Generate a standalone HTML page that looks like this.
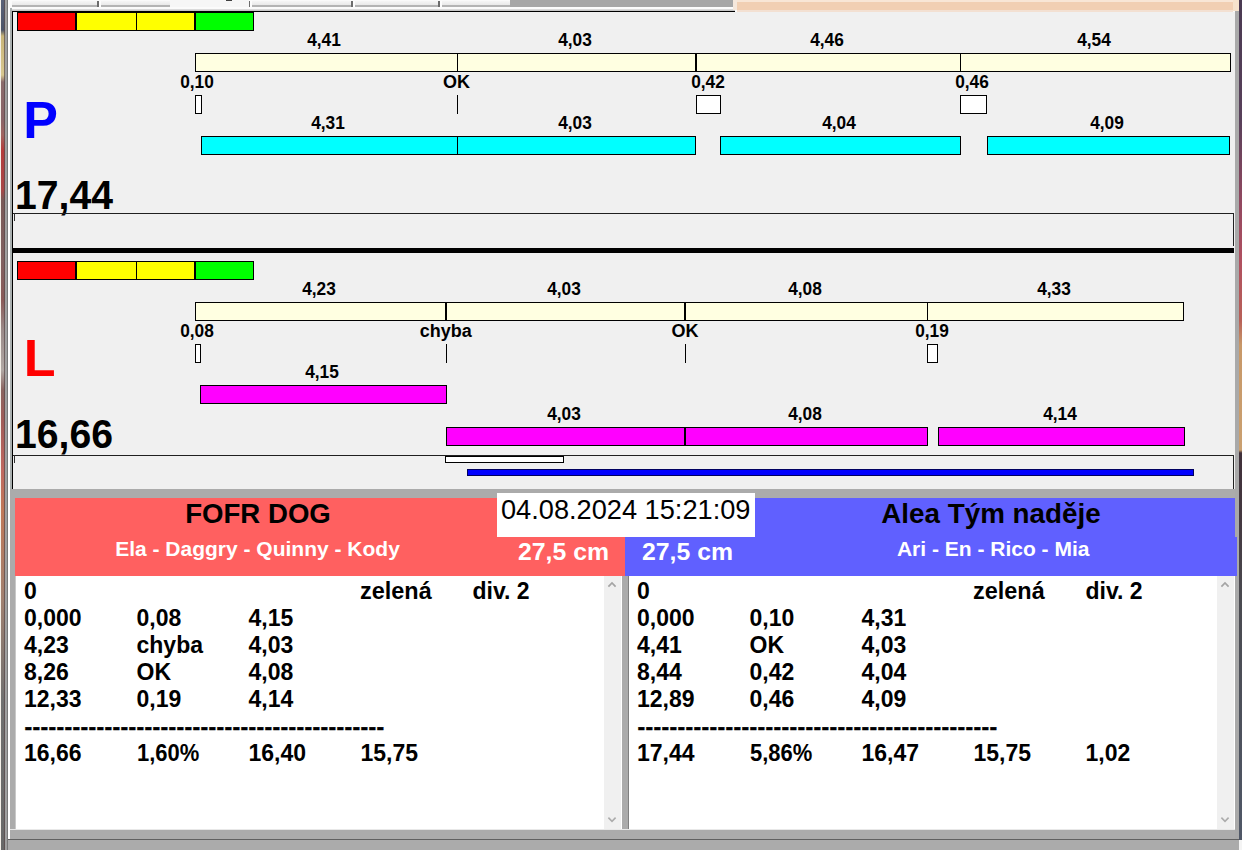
<!DOCTYPE html>
<html lang="cs"><head><meta charset="utf-8"><title>Flyball</title>
<style>
html,body{margin:0;padding:0;}
body{width:1242px;height:850px;overflow:hidden;position:relative;background:#f0f0f0;font-family:"Liberation Sans",sans-serif;}
.r{position:absolute;box-sizing:border-box;}
.t{position:absolute;white-space:pre;font-weight:700;}
.dash{-webkit-text-stroke:0.45px #000;}
</style></head><body>
<div class="r" style="left:0px;top:0px;width:1242px;height:12px;background:#fafafa;"></div>
<div class="r" style="left:12px;top:1px;width:498px;height:4px;background:#f0f0f0;background:linear-gradient(#f6f6f6,#e9e9e9);"></div>
<div class="r" style="left:12px;top:5px;width:498px;height:2px;background:#b4b4b4;"></div>
<div class="r" style="left:12px;top:7px;width:723px;height:2px;background:#fbfbfb;"></div>
<div class="r" style="left:12px;top:9px;width:723px;height:2px;background:#d0d0d0;background:linear-gradient(#e4e4e4,#bcbcbc);"></div>
<div class="r" style="left:97px;top:1px;width:2px;height:6px;background:#6c6c6c;"></div>
<div class="r" style="left:99px;top:1px;width:2px;height:6px;background:#fcfcfc;"></div>
<div class="r" style="left:248px;top:1px;width:2px;height:6px;background:#6c6c6c;"></div>
<div class="r" style="left:250px;top:1px;width:2px;height:6px;background:#fcfcfc;"></div>
<div class="r" style="left:351px;top:1px;width:2px;height:6px;background:#6c6c6c;"></div>
<div class="r" style="left:353px;top:1px;width:2px;height:6px;background:#fcfcfc;"></div>
<div class="r" style="left:438px;top:1px;width:2px;height:6px;background:#6c6c6c;"></div>
<div class="r" style="left:440px;top:1px;width:2px;height:6px;background:#fcfcfc;"></div>
<div class="r" style="left:170px;top:0px;width:79px;height:7px;background:#f6f6f6;"></div>
<div class="r" style="left:226px;top:0px;width:6px;height:1px;background:#404040;"></div>
<div class="r" style="left:510px;top:0px;width:223px;height:7px;background:#a6a6a6;"></div>
<div class="r" style="left:733px;top:0px;width:4px;height:10px;background:#f6e8dc;"></div>
<div class="r" style="left:737px;top:0px;width:496px;height:11px;background:#f1cfb3;"></div>
<div class="r" style="left:737px;top:0px;width:496px;height:2px;background:#f8e6d6;"></div>
<div class="r" style="left:737px;top:10px;width:496px;height:2px;background:#f3e0d2;"></div>
<div class="r" style="left:13px;top:12px;width:1222px;height:477px;background:#f0f0f0;"></div>
<div class="r" style="left:0px;top:0px;width:1px;height:850px;background:#f4f0e8;"></div>
<div class="r" style="left:1px;top:0px;width:4px;height:850px;background:#806060;background:linear-gradient(#5a6278 0,#4c5468 30px,#c8b478 36px,#d8c890 75px,#8a6a6a 82px,#8a6468 120px,#a06460 135px,#b43c3c 150px,#a84848 190px,#7a5a58 200px,#806060 260px,#8a5a58 300px,#9a8a88 330px,#b0a8a4 370px,#8a6460 390px,#a05c58 420px,#c06860 470px,#c07858 510px,#a08070 600px,#707070 700px,#686868 850px);"></div>
<div class="r" style="left:4px;top:0px;width:1px;height:850px;background:#5a4a4a;opacity:.7;"></div>
<div class="r" style="left:5px;top:0px;width:2px;height:850px;background:#a0a0a0;"></div>
<div class="r" style="left:7px;top:0px;width:1px;height:850px;background:#787878;"></div>
<div class="r" style="left:8px;top:8px;width:2px;height:832px;background:#ffffff;"></div>
<div class="r" style="left:10px;top:8px;width:2px;height:481px;background:#aab0b0;"></div>
<div class="r" style="left:12px;top:11px;width:1px;height:478px;background:#000;"></div>
<div class="r" style="left:1235px;top:11px;width:4px;height:839px;background:#a9a9a9;"></div>
<div class="r" style="left:1239px;top:0px;width:3px;height:850px;background:#504050;background:linear-gradient(#4a3a52 0,#58405a 120px,#904860 200px,#b05060 260px,#b86058 320px,#c89868 345px,#caa070 450px,#40303a 453px,#443840 520px,#4a4a50 600px,#505868 850px);"></div>
<div class="r" style="left:1233px;top:0px;width:6px;height:11px;background:#f6e2cc;"></div>
<div class="r" style="left:12px;top:11px;width:723px;height:1px;background:#000;"></div>
<div class="r" style="left:17px;top:12px;width:59px;height:19px;background:#ff0000;border:1px solid #000;"></div>
<div class="r" style="left:76px;top:12px;width:61px;height:19px;background:#ffff00;border:1px solid #000;"></div>
<div class="r" style="left:136px;top:12px;width:59px;height:19px;background:#ffff00;border:1px solid #000;"></div>
<div class="r" style="left:195px;top:12px;width:59px;height:19px;background:#00ff00;border:1px solid #000;"></div>
<div class="r" style="left:195px;top:53px;width:1036px;height:19px;background:#ffffe1;border:1px solid #000;"></div>
<div class="r" style="left:457px;top:53px;width:1px;height:19px;background:#000;"></div>
<div class="r" style="left:695px;top:53px;width:2px;height:19px;background:#000;"></div>
<div class="r" style="left:960px;top:53px;width:1px;height:19px;background:#000;"></div>
<div class="r" style="left:195px;top:95px;width:7px;height:19px;background:#fff;border:1px solid #000;"></div>
<div class="r" style="left:457px;top:95px;width:1px;height:19px;background:#000;"></div>
<div class="r" style="left:696px;top:95px;width:25px;height:19px;background:#fff;border:1px solid #000;"></div>
<div class="r" style="left:960px;top:95px;width:27px;height:19px;background:#fff;border:1px solid #000;"></div>
<div class="r" style="left:201px;top:136px;width:257px;height:19px;background:#00ffff;border:1px solid #000;"></div>
<div class="r" style="left:457px;top:136px;width:239px;height:19px;background:#00ffff;border:1px solid #000;"></div>
<div class="r" style="left:720px;top:136px;width:241px;height:19px;background:#00ffff;border:1px solid #000;"></div>
<div class="r" style="left:987px;top:136px;width:243px;height:19px;background:#00ffff;border:1px solid #000;"></div>
<div class="t " style="top:30.76px;font-size:18px;line-height:18px;color:#000;transform:scaleX(0.96);transform-origin:center center;left:174.10px;width:300px;text-align:center;">4,41</div>
<div class="t " style="top:30.76px;font-size:18px;line-height:18px;color:#000;transform:scaleX(0.96);transform-origin:center center;left:424.90px;width:300px;text-align:center;">4,03</div>
<div class="t " style="top:30.76px;font-size:18px;line-height:18px;color:#000;transform:scaleX(0.96);transform-origin:center center;left:676.60px;width:300px;text-align:center;">4,46</div>
<div class="t " style="top:30.76px;font-size:18px;line-height:18px;color:#000;transform:scaleX(0.96);transform-origin:center center;left:944.10px;width:300px;text-align:center;">4,54</div>
<div class="t " style="top:73.36px;font-size:18px;line-height:18px;color:#000;transform:scaleX(0.96);transform-origin:center center;left:47.10px;width:300px;text-align:center;">0,10</div>
<div class="t " style="top:73.36px;font-size:18px;line-height:18px;color:#000;transform:scaleX(1.0);transform-origin:center center;left:306.60px;width:300px;text-align:center;">OK</div>
<div class="t " style="top:73.36px;font-size:18px;line-height:18px;color:#000;transform:scaleX(0.96);transform-origin:center center;left:557.60px;width:300px;text-align:center;">0,42</div>
<div class="t " style="top:73.36px;font-size:18px;line-height:18px;color:#000;transform:scaleX(0.96);transform-origin:center center;left:822.20px;width:300px;text-align:center;">0,46</div>
<div class="t " style="top:113.76px;font-size:18px;line-height:18px;color:#000;transform:scaleX(0.96);transform-origin:center center;left:177.90px;width:300px;text-align:center;">4,31</div>
<div class="t " style="top:113.76px;font-size:18px;line-height:18px;color:#000;transform:scaleX(0.96);transform-origin:center center;left:424.90px;width:300px;text-align:center;">4,03</div>
<div class="t " style="top:113.76px;font-size:18px;line-height:18px;color:#000;transform:scaleX(0.96);transform-origin:center center;left:688.60px;width:300px;text-align:center;">4,04</div>
<div class="t " style="top:113.76px;font-size:18px;line-height:18px;color:#000;transform:scaleX(0.96);transform-origin:center center;left:957.10px;width:300px;text-align:center;">4,09</div>
<div class="t " style="top:93.98px;font-size:52px;line-height:52px;color:#0000ff;left:23.30px;">P</div>
<div class="t " style="top:175.29px;font-size:41px;line-height:41px;color:#000;transform:scaleX(0.955);transform-origin:left center;left:15.00px;">17,44</div>
<div class="r" style="left:13px;top:213px;width:1221px;height:1px;background:#202020;"></div>
<div class="r" style="left:1233px;top:213px;width:1px;height:33px;background:#202020;"></div>
<div class="r" style="left:14px;top:213px;width:1px;height:8px;background:#303030;"></div>
<div class="r" style="left:12px;top:248px;width:1222px;height:5px;background:#000;"></div>
<div class="r" style="left:17px;top:261px;width:59px;height:19px;background:#ff0000;border:1px solid #000;"></div>
<div class="r" style="left:76px;top:261px;width:61px;height:19px;background:#ffff00;border:1px solid #000;"></div>
<div class="r" style="left:136px;top:261px;width:59px;height:19px;background:#ffff00;border:1px solid #000;"></div>
<div class="r" style="left:195px;top:261px;width:59px;height:19px;background:#00ff00;border:1px solid #000;"></div>
<div class="r" style="left:195px;top:302px;width:989px;height:19px;background:#ffffe1;border:1px solid #000;"></div>
<div class="r" style="left:445px;top:302px;width:2px;height:19px;background:#000;"></div>
<div class="r" style="left:684px;top:302px;width:2px;height:19px;background:#000;"></div>
<div class="r" style="left:927px;top:302px;width:1px;height:19px;background:#000;"></div>
<div class="r" style="left:195px;top:344px;width:6px;height:19px;background:#fff;border:1px solid #000;"></div>
<div class="r" style="left:446px;top:344px;width:1px;height:19px;background:#000;"></div>
<div class="r" style="left:685px;top:344px;width:1px;height:19px;background:#000;"></div>
<div class="r" style="left:927px;top:344px;width:11px;height:19px;background:#fff;border:1px solid #000;"></div>
<div class="r" style="left:200px;top:385px;width:247px;height:19px;background:#ff00ff;border:1px solid #000;"></div>
<div class="r" style="left:446px;top:427px;width:239px;height:19px;background:#ff00ff;border:1px solid #000;"></div>
<div class="r" style="left:685px;top:427px;width:243px;height:19px;background:#ff00ff;border:1px solid #000;"></div>
<div class="r" style="left:938px;top:427px;width:247px;height:19px;background:#ff00ff;border:1px solid #000;"></div>
<div class="t " style="top:279.76px;font-size:18px;line-height:18px;color:#000;transform:scaleX(0.96);transform-origin:center center;left:169.10px;width:300px;text-align:center;">4,23</div>
<div class="t " style="top:279.76px;font-size:18px;line-height:18px;color:#000;transform:scaleX(0.96);transform-origin:center center;left:414.20px;width:300px;text-align:center;">4,03</div>
<div class="t " style="top:279.76px;font-size:18px;line-height:18px;color:#000;transform:scaleX(0.96);transform-origin:center center;left:655.10px;width:300px;text-align:center;">4,08</div>
<div class="t " style="top:279.76px;font-size:18px;line-height:18px;color:#000;transform:scaleX(0.96);transform-origin:center center;left:904.10px;width:300px;text-align:center;">4,33</div>
<div class="t " style="top:322.36px;font-size:18px;line-height:18px;color:#000;transform:scaleX(0.96);transform-origin:center center;left:46.60px;width:300px;text-align:center;">0,08</div>
<div class="t " style="top:322.36px;font-size:18px;line-height:18px;color:#000;transform:scaleX(1.0);transform-origin:center center;left:295.70px;width:300px;text-align:center;">chyba</div>
<div class="t " style="top:322.36px;font-size:18px;line-height:18px;color:#000;transform:scaleX(1.0);transform-origin:center center;left:535.00px;width:300px;text-align:center;">OK</div>
<div class="t " style="top:322.36px;font-size:18px;line-height:18px;color:#000;transform:scaleX(0.96);transform-origin:center center;left:781.60px;width:300px;text-align:center;">0,19</div>
<div class="t " style="top:362.76px;font-size:18px;line-height:18px;color:#000;transform:scaleX(0.96);transform-origin:center center;left:172.30px;width:300px;text-align:center;">4,15</div>
<div class="t " style="top:404.76px;font-size:18px;line-height:18px;color:#000;transform:scaleX(0.96);transform-origin:center center;left:414.20px;width:300px;text-align:center;">4,03</div>
<div class="t " style="top:404.76px;font-size:18px;line-height:18px;color:#000;transform:scaleX(0.96);transform-origin:center center;left:655.10px;width:300px;text-align:center;">4,08</div>
<div class="t " style="top:404.76px;font-size:18px;line-height:18px;color:#000;transform:scaleX(0.96);transform-origin:center center;left:910.10px;width:300px;text-align:center;">4,14</div>
<div class="t " style="top:331.98px;font-size:52px;line-height:52px;color:#ff0000;left:23.70px;">L</div>
<div class="t " style="top:414.29px;font-size:41px;line-height:41px;color:#000;transform:scaleX(0.955);transform-origin:left center;left:15.00px;">16,66</div>
<div class="r" style="left:13px;top:455px;width:1221px;height:1px;background:#202020;"></div>
<div class="r" style="left:1233px;top:455px;width:1px;height:34px;background:#202020;"></div>
<div class="r" style="left:14px;top:455px;width:1px;height:8px;background:#303030;"></div>
<div class="r" style="left:445px;top:456px;width:119px;height:7px;background:#fff;border:1px solid #000;"></div>
<div class="r" style="left:467px;top:469px;width:727px;height:7px;background:#0000ff;border:1px solid #000060;"></div>
<div class="r" style="left:10px;top:489px;width:1225px;height:361px;background:#ababab;"></div>
<div class="r" style="left:8px;top:839px;width:1231px;height:1px;background:#606060;"></div>
<div class="r" style="left:8px;top:840px;width:1231px;height:10px;background:#ababab;"></div>
<div class="r" style="left:1239px;top:840px;width:3px;height:10px;background:#f4f4f4;"></div>
<div class="r" style="left:15px;top:498px;width:610px;height:78px;background:#ff6060;"></div>
<div class="r" style="left:625px;top:498px;width:610px;height:78px;background:#6060ff;"></div>
<div class="r" style="left:1235px;top:537px;width:2px;height:39px;background:#6060ff;"></div>
<div class="r" style="left:497px;top:493px;width:258px;height:44px;background:#fff;"></div>
<div class="t " style="top:495.88px;font-size:27.2px;line-height:27.2px;color:#000;font-weight:400;left:501.00px;">04.08.2024 15:21:09</div>
<div class="t " style="top:499.64px;font-size:27.6px;line-height:27.6px;color:#000;left:108.00px;width:300px;text-align:center;">FOFR DOG</div>
<div class="t " style="top:538.22px;font-size:21px;line-height:21px;color:#fff;left:107.50px;width:300px;text-align:center;">Ela - Daggry - Quinny - Kody</div>
<div class="t " style="top:540.21px;font-size:24.8px;line-height:24.8px;color:#fff;left:518.00px;">27,5 cm</div>
<div class="t " style="top:540.21px;font-size:24.8px;line-height:24.8px;color:#fff;left:642.00px;">27,5 cm</div>
<div class="t " style="top:500.17px;font-size:27.8px;line-height:27.8px;color:#000;left:841.00px;width:300px;text-align:center;">Alea Tým naděje</div>
<div class="t " style="top:538.22px;font-size:21px;line-height:21px;color:#fff;left:843.20px;width:300px;text-align:center;">Ari - En - Rico - Mia</div>
<div class="r" style="left:15px;top:576px;width:607px;height:253px;background:#fff;"></div>
<div class="r" style="left:604px;top:576px;width:17px;height:253px;background:#f0f0f0;"></div>
<svg class="r" style="left:605.5px;top:579px" width="12" height="12" viewBox="0 0 12 12"><path d="M2.4 7.6 L6 3.9 L9.6 7.6" fill="none" stroke="#a4a4a4" stroke-width="1.7"/></svg>
<svg class="r" style="left:605.5px;top:812px" width="12" height="12" viewBox="0 0 12 12"><path d="M2.4 5.6 L6 9.3 L9.6 5.6" fill="none" stroke="#acacac" stroke-width="1.6"/></svg>
<div class="r" style="left:15px;top:576px;width:1px;height:253px;background:#c8c8c8;"></div>
<div class="r" style="left:629px;top:576px;width:606px;height:253px;background:#fff;"></div>
<div class="r" style="left:1217px;top:576px;width:17px;height:253px;background:#f0f0f0;"></div>
<svg class="r" style="left:1218.5px;top:579px" width="12" height="12" viewBox="0 0 12 12"><path d="M2.4 7.6 L6 3.9 L9.6 7.6" fill="none" stroke="#a4a4a4" stroke-width="1.7"/></svg>
<svg class="r" style="left:1218.5px;top:812px" width="12" height="12" viewBox="0 0 12 12"><path d="M2.4 5.6 L6 9.3 L9.6 5.6" fill="none" stroke="#acacac" stroke-width="1.6"/></svg>
<div class="r" style="left:628px;top:576px;width:1px;height:253px;background:#808080;"></div>
<div class="r" style="left:10px;top:829px;width:1225px;height:1px;background:#e8e8e8;"></div>
<div class="t " style="top:579.53px;font-size:23px;line-height:23px;color:#000;left:24.00px;">0</div>
<div class="t " style="top:579.53px;font-size:23px;line-height:23px;color:#000;transform:scaleX(1.02);transform-origin:left center;left:360.10px;">zelená</div>
<div class="t " style="top:579.53px;font-size:23px;line-height:23px;color:#000;left:472.50px;">div. 2</div>
<div class="t " style="top:606.53px;font-size:23px;line-height:23px;color:#000;left:24.00px;">0,000</div>
<div class="t " style="top:606.53px;font-size:23px;line-height:23px;color:#000;left:136.50px;">0,08</div>
<div class="t " style="top:606.53px;font-size:23px;line-height:23px;color:#000;left:248.50px;">4,15</div>
<div class="t " style="top:633.53px;font-size:23px;line-height:23px;color:#000;left:24.00px;">4,23</div>
<div class="t " style="top:633.53px;font-size:23px;line-height:23px;color:#000;left:136.50px;">chyba</div>
<div class="t " style="top:633.53px;font-size:23px;line-height:23px;color:#000;left:248.50px;">4,03</div>
<div class="t " style="top:660.53px;font-size:23px;line-height:23px;color:#000;left:24.00px;">8,26</div>
<div class="t " style="top:660.53px;font-size:23px;line-height:23px;color:#000;left:136.50px;">OK</div>
<div class="t " style="top:660.53px;font-size:23px;line-height:23px;color:#000;left:248.50px;">4,08</div>
<div class="t " style="top:687.53px;font-size:23px;line-height:23px;color:#000;left:24.00px;">12,33</div>
<div class="t " style="top:687.53px;font-size:23px;line-height:23px;color:#000;left:136.50px;">0,19</div>
<div class="t " style="top:687.53px;font-size:23px;line-height:23px;color:#000;left:248.50px;">4,14</div>
<div class="t dash" style="top:715.53px;font-size:23px;line-height:23px;color:#000;letter-spacing:0.34px;left:24.50px;">---------------------------------------------</div>
<div class="t " style="top:741.53px;font-size:23px;line-height:23px;color:#000;left:24.00px;">16,66</div>
<div class="t " style="top:741.53px;font-size:23px;line-height:23px;color:#000;transform:scaleX(0.955);transform-origin:left center;left:136.50px;">1,60%</div>
<div class="t " style="top:741.53px;font-size:23px;line-height:23px;color:#000;left:248.50px;">16,40</div>
<div class="t " style="top:741.53px;font-size:23px;line-height:23px;color:#000;left:360.50px;">15,75</div>
<div class="t " style="top:579.53px;font-size:23px;line-height:23px;color:#000;left:637.00px;">0</div>
<div class="t " style="top:579.53px;font-size:23px;line-height:23px;color:#000;transform:scaleX(1.02);transform-origin:left center;left:973.10px;">zelená</div>
<div class="t " style="top:579.53px;font-size:23px;line-height:23px;color:#000;left:1085.50px;">div. 2</div>
<div class="t " style="top:606.53px;font-size:23px;line-height:23px;color:#000;left:637.00px;">0,000</div>
<div class="t " style="top:606.53px;font-size:23px;line-height:23px;color:#000;left:749.50px;">0,10</div>
<div class="t " style="top:606.53px;font-size:23px;line-height:23px;color:#000;left:861.50px;">4,31</div>
<div class="t " style="top:633.53px;font-size:23px;line-height:23px;color:#000;left:637.00px;">4,41</div>
<div class="t " style="top:633.53px;font-size:23px;line-height:23px;color:#000;left:749.50px;">OK</div>
<div class="t " style="top:633.53px;font-size:23px;line-height:23px;color:#000;left:861.50px;">4,03</div>
<div class="t " style="top:660.53px;font-size:23px;line-height:23px;color:#000;left:637.00px;">8,44</div>
<div class="t " style="top:660.53px;font-size:23px;line-height:23px;color:#000;left:749.50px;">0,42</div>
<div class="t " style="top:660.53px;font-size:23px;line-height:23px;color:#000;left:861.50px;">4,04</div>
<div class="t " style="top:687.53px;font-size:23px;line-height:23px;color:#000;left:637.00px;">12,89</div>
<div class="t " style="top:687.53px;font-size:23px;line-height:23px;color:#000;left:749.50px;">0,46</div>
<div class="t " style="top:687.53px;font-size:23px;line-height:23px;color:#000;left:861.50px;">4,09</div>
<div class="t dash" style="top:715.53px;font-size:23px;line-height:23px;color:#000;letter-spacing:0.34px;left:637.50px;">---------------------------------------------</div>
<div class="t " style="top:741.53px;font-size:23px;line-height:23px;color:#000;left:637.00px;">17,44</div>
<div class="t " style="top:741.53px;font-size:23px;line-height:23px;color:#000;transform:scaleX(0.955);transform-origin:left center;left:749.50px;">5,86%</div>
<div class="t " style="top:741.53px;font-size:23px;line-height:23px;color:#000;left:861.50px;">16,47</div>
<div class="t " style="top:741.53px;font-size:23px;line-height:23px;color:#000;left:973.50px;">15,75</div>
<div class="t " style="top:741.53px;font-size:23px;line-height:23px;color:#000;left:1085.50px;">1,02</div>
</body></html>
